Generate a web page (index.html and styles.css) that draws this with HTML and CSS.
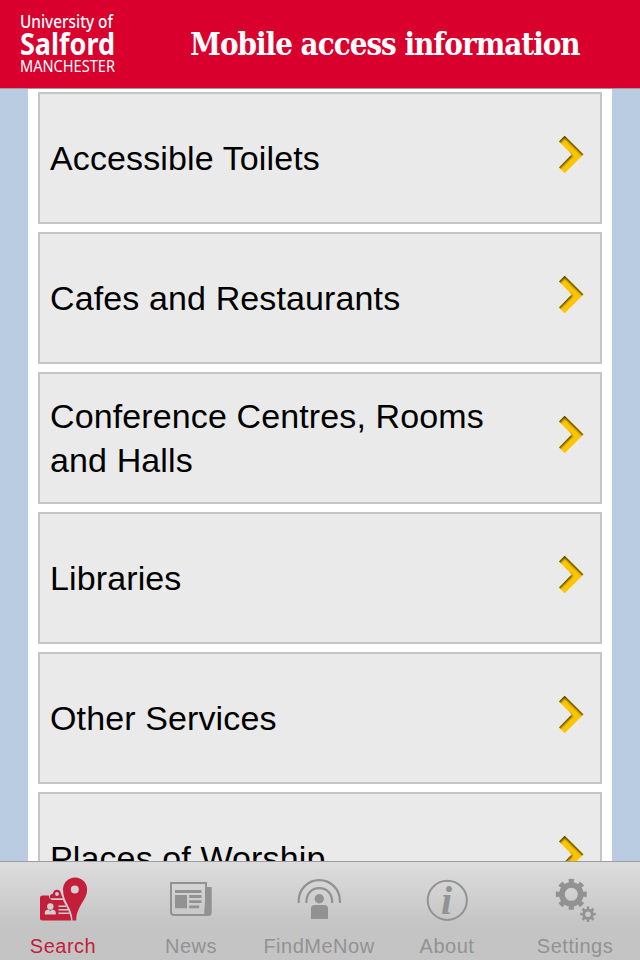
FILE: index.html
```html
<!DOCTYPE html>
<html lang="en">
<head>
  <meta charset="UTF-8">
  <meta name="viewport" content="width=device-width, initial-scale=1.0">
  <title>Mobile access information</title>
  <link rel="stylesheet" href="styles.css">
</head>
<body>
  <svg class="defs" width="0" height="0">
    <defs>
      <clipPath id="chevronClip">
        <path d="M1 6.500 6.700.8 25.500 19.500 6.700 38.200 1 32.500 13.700 19.500z"/>
      </clipPath>
      <filter id="soft" x="-30%" y="-30%" width="160%" height="160%">
        <feGaussianBlur stdDeviation="1.300"/>
      </filter>
      <symbol id="chevron" viewBox="0 0 27 39">
        <g clip-path="url(#chevronClip)">
          <rect width="27" height="39" fill="#fdc500"/>
          <path d="M0 7 6.700 0 26.500 19.500M0 32.500 13 19.500" fill="none" stroke="#4a3c00" stroke-width="4" filter="url(#soft)"/>
        </g>
      </symbol>
    </defs>
  </svg>

  <header>
    <svg class="logo" width="100" height="66" viewBox="0 0 100 66">
      <text class="logo-top" x="-1" y="19.500" textLength="93" lengthAdjust="spacingAndGlyphs">University of</text>
      <text class="logo-name" x="-1" y="47" textLength="95" lengthAdjust="spacingAndGlyphs">Salford</text>
      <text class="logo-city" x="-1" y="63.500" textLength="95" lengthAdjust="spacingAndGlyphs">MANCHESTER</text>
    </svg>
    <h1>Mobile access information</h1>
  </header>

  <main class="content">
    <a class="item" href="#"><span>Accessible Toilets</span><svg class="chevron"><use href="#chevron"/></svg></a>
    <a class="item" href="#"><span>Cafes and Restaurants</span><svg class="chevron"><use href="#chevron"/></svg></a>
    <a class="item" href="#"><span>Conference Centres, Rooms and Halls</span><svg class="chevron"><use href="#chevron"/></svg></a>
    <a class="item" href="#"><span>Libraries</span><svg class="chevron"><use href="#chevron"/></svg></a>
    <a class="item" href="#"><span>Other Services</span><svg class="chevron"><use href="#chevron"/></svg></a>
    <a class="item" href="#"><span>Places of Worship</span><svg class="chevron"><use href="#chevron"/></svg></a>
  </main>

  <nav class="tabs">
    <a class="tab active" href="#">
      <svg viewBox="0 0 60 48">
        <path fill="currentColor" d="M8.500 21.500h6.300c.3 3 1.800 4.400 4.200 4.400H29c1.800 4.500 6.500 10 8.300 20.600H8.500A2.500 2.500 0 0 1 6 44V24a2.500 2.500 0 0 1 2.500-2.500z"/>
        <path fill="currentColor" fill-rule="evenodd" d="M16 24.300v-2c0-1.700 1.500-2.500 3-2.600.2-2.500 1.700-4 4-4s3.600 1.500 3.900 3.700c.6 1.700 1.200 3.300 2 4.900zM23 18.100a1.900 1.900 0 1 0 0 3.800 1.900 1.900 0 0 0 0-3.800z"/>
        <path fill="currentColor" fill-rule="evenodd" d="M38.500 46.500c0-13-9.500-18-9.500-31a12 12 0 0 1 24.100 0c0 11-10.600 16-10.900 31zM40.800 11.500a4 4 0 1 0 0 8 4 4 0 0 0 0-8z"/>
        <circle class="cut" cx="16.300" cy="32.500" r="3.200"/>
        <path class="cut" d="M10.800 40.500v-2c0-2 2.200-2.800 4-3l1.500 1.800 1.500-1.800c1.800.2 4 1 4 3v2z"/>
        <path class="cut-line" d="M24.500 32.200h7.500M24.500 35.700h9.800M24.500 39.200h11"/>
      </svg>
      <span>Search</span>
    </a>
    <a class="tab" href="#">
      <svg viewBox="0 0 60 48">
        <path fill="none" stroke="currentColor" stroke-width="2" d="M9 9h35v32H12a3 3 0 0 1-3-3z"/>
        <path fill="currentColor" d="M44 13h5.700v25.500a3.500 3.500 0 0 1-3.500 3.500H42z"/>
        <path fill="currentColor" d="M13 16h26.500v3H13zM13 21h12v13.200H13zM27.200 21h12.300v3H27.200zM27.200 26.200h12.300v2.800H27.200zM27.200 31.500h10v2.700h-10z"/>
      </svg>
      <span>News</span>
    </a>
    <a class="tab" href="#">
      <svg viewBox="0 0 60 48">
        <path fill="none" stroke="currentColor" stroke-width="2.200" d="M8.700 29v-2.300a20.600 20.600 0 0 1 41.200 0V29M16.500 29c-.6-9 5-14.800 12.800-14.800S42.700 20 42.100 29"/>
        <circle fill="currentColor" cx="29.300" cy="24.700" r="4.700"/>
        <path fill="currentColor" d="M21 45V34.500a3.500 3.500 0 0 1 3.500-3.500h10a3.500 3.500 0 0 1 3.500 3.500V45z"/>
      </svg>
      <span>FindMeNow</span>
    </a>
    <a class="tab" href="#">
      <svg viewBox="0 0 60 48">
        <circle fill="none" stroke="currentColor" stroke-width="2" cx="29.300" cy="26.300" r="19.600"/>
        <text class="info" x="23" y="40.300">i</text>
      </svg>
      <span>About</span>
    </a>
    <a class="tab" href="#">
      <svg viewBox="0 0 60 48">
        <g fill="none" stroke="currentColor">
          <circle cx="25.300" cy="20.300" r="9.400" stroke-width="5.800"/>
          <circle cx="25.300" cy="20.300" r="13.200" stroke-width="4.600" pathLength="16" stroke-dasharray="1 1" stroke-dashoffset=".5"/>
          <circle cx="42" cy="40.200" r="4.300" stroke-width="3"/>
          <circle cx="42" cy="40.200" r="6.500" stroke-width="2.600" pathLength="16" stroke-dasharray="1 1" stroke-dashoffset=".5"/>
        </g>
      </svg>
      <span>Settings</span>
    </a>
  </nav>
</body>
</html>
```
FILE: styles.css
```css
* {
  box-sizing: border-box;
}

body {
  margin: 0;
  height: 100vh;
  display: flex;
  flex-direction: column;
  overflow: hidden;
  background: #b9cce2;
  font-family: "Liberation Sans", Arial, sans-serif;
}

a {
  text-decoration: none;
}

.defs {
  position: absolute;
}

header {
  flex: none;
  height: 89px;
  display: flex;
  align-items: flex-start;
  padding: 8px 0 0 21px;
  background: #d9002d;
  border-bottom: 1px solid #a09a9f;
}

.logo {
  flex: none;
  overflow: visible;
  fill: #fff;
  font-family: "Noto Sans", sans-serif;
}

.logo-top {
  font-size: 18px;
  font-weight: 500;
}

.logo-name {
  font-size: 31px;
  font-weight: bold;
}

.logo-city {
  font-size: 15.5px;
}

h1 {
  margin: 17px 0 0 69px;
  color: #fff;
  font-family: "DejaVu Serif Condensed", "DejaVu Serif", serif;
  font-stretch: condensed;
  font-size: 31px;
  font-weight: bold;
  line-height: 38px;
  letter-spacing: -1px;
  white-space: nowrap;
}

.content {
  flex: 1;
  min-height: 0;
  overflow: hidden;
  margin: 0 28px;
  padding: 3px 10px 0;
  display: flex;
  flex-direction: column;
  gap: 8px;
  background: #fff;
}

.item {
  flex: none;
  height: 132px;
  display: flex;
  justify-content: space-between;
  align-items: center;
  padding: 0 15px 0 10px;
  border: 2px solid #c5c5c5;
  background: #eaeaea;
  color: #000;
  font-size: 34px;
  line-height: 44px;
}

.item span {
  width: 460px;
  letter-spacing: 0.12px;
}

.chevron {
  flex: none;
  width: 27px;
  height: 39px;
  margin-bottom: 7px;
}

.tabs {
  flex: none;
  height: 99px;
  display: flex;
  border-top: 1px solid #9b9c9d;
  background: linear-gradient(#dcdddc, #c4c4c4 65%);
}

.tab {
  flex: 1;
  display: flex;
  flex-direction: column;
  align-items: center;
  padding-top: 12px;
  color: #929292;
}

.tab.active {
  color: #c41e3a;
}

.tab svg {
  width: 60px;
  height: 48px;
}

.tab span {
  margin: 12px 2px 0 0;
  font-size: 20px;
  line-height: 24px;
  letter-spacing: 0.5px;
}

.cut {
  fill: #cfcfcf;
}

.cut-line {
  fill: none;
  stroke: #cfcfcf;
  stroke-width: 1.5;
}

.info {
  fill: currentColor;
  font: italic bold 40px "Liberation Serif", serif;
}
```
